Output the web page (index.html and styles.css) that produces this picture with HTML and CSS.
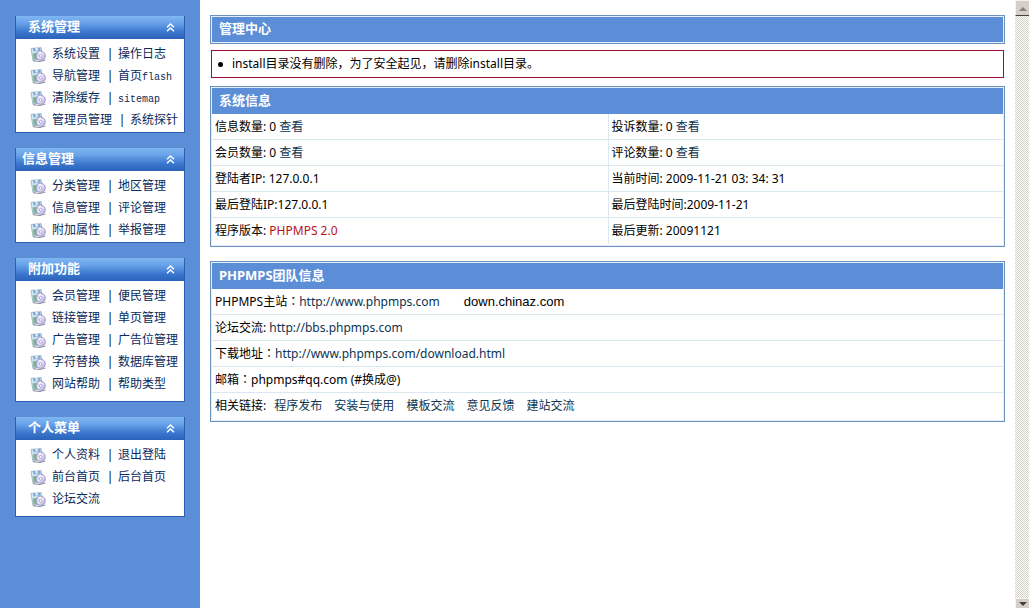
FILE: index.html
```html
<!DOCTYPE html>
<html lang="zh-CN">
<head>
<meta charset="utf-8">
<title>管理中心</title>
<link rel="stylesheet" href="styles.css">
</head>
<body>
<svg class="defs" aria-hidden="true">
  <defs>
    <linearGradient id="page-fill" x1="0" y1="0" x2="1" y2="1"><stop offset="0" stop-color="#eaf5fc"/><stop offset="1" stop-color="#8db4d6"/></linearGradient>
    <linearGradient id="disc-fill" x1="0" y1="0" x2="1" y2="1"><stop offset="0" stop-color="#c6b8ec"/><stop offset=".5" stop-color="#e9e6fa"/><stop offset="1" stop-color="#a79bd8"/></linearGradient>
    <symbol id="item-icon" viewBox="0 0 16 16">
      <path d="M1 2.5 11 1.5 13 12 3 14.5Z" fill="url(#page-fill)" stroke="#9aabc4" stroke-width=".8"/>
      <path d="M3 2h7l.4 2.4-7 .8Z" fill="#7fa9d4"/>
      <path d="M5.2 1.6h2.6v3H5.5Z" fill="#dceefa"/>
      <path d="M2.8 7.5 6 7l.8 5.5-3 .9Z" fill="#79b984"/>
      <path d="M3 14.8 10 15.5 15.5 14" fill="none" stroke="#8f91a3" stroke-width="1"/>
      <circle cx="10.7" cy="9.8" r="4.6" fill="url(#disc-fill)" stroke="#8e86b8" stroke-width=".8"/>
      <path d="M10.7 9.8 8 6.6a4 4 0 0 1 3-1Z" fill="#fff" opacity=".8"/>
      <circle cx="10.7" cy="9.8" r="1.4" fill="#fff" stroke="#9a92c4" stroke-width=".7"/>
    </symbol>
    <symbol id="collapse" viewBox="0 0 9 9">
      <path d="M1 4.3 4.5 1 8 4.3M1 8.3 4.5 5 8 8.3" fill="none" stroke="#fff" stroke-width="1.4"/>
    </symbol>
  </defs>
</svg>
<div class="layout">
  <nav class="sidebar">
    <section class="menu">
      <h2 class="menu-title">系统管理<button class="toggle" aria-label="收起"><svg><use href="#collapse"/></svg></button></h2>
      <ul class="menu-list">
        <li><svg class="icon"><use href="#item-icon"/></svg><a href="#">系统设置</a><i>|</i><a href="#">操作日志</a></li>
        <li><svg class="icon"><use href="#item-icon"/></svg><a href="#">导航管理</a><i>|</i><a href="#">首页<span class="mono">flash</span></a></li>
        <li><svg class="icon"><use href="#item-icon"/></svg><a href="#">清除缓存</a><i>|</i><a href="#"><span class="mono">sitemap</span></a></li>
        <li><svg class="icon"><use href="#item-icon"/></svg><a href="#">管理员管理</a><i>|</i><a href="#">系统探针</a></li>
      </ul>
    </section>
    <section class="menu">
      <h2 class="menu-title outdent">信息管理<button class="toggle" aria-label="收起"><svg><use href="#collapse"/></svg></button></h2>
      <ul class="menu-list">
        <li><svg class="icon"><use href="#item-icon"/></svg><a href="#">分类管理</a><i>|</i><a href="#">地区管理</a></li>
        <li><svg class="icon"><use href="#item-icon"/></svg><a href="#">信息管理</a><i>|</i><a href="#">评论管理</a></li>
        <li><svg class="icon"><use href="#item-icon"/></svg><a href="#">附加属性</a><i>|</i><a href="#">举报管理</a></li>
      </ul>
    </section>
    <section class="menu">
      <h2 class="menu-title">附加功能<button class="toggle" aria-label="收起"><svg><use href="#collapse"/></svg></button></h2>
      <ul class="menu-list roomy">
        <li><svg class="icon"><use href="#item-icon"/></svg><a href="#">会员管理</a><i>|</i><a href="#">便民管理</a></li>
        <li><svg class="icon"><use href="#item-icon"/></svg><a href="#">链接管理</a><i>|</i><a href="#">单页管理</a></li>
        <li><svg class="icon"><use href="#item-icon"/></svg><a href="#">广告管理</a><i>|</i><a href="#">广告位管理</a></li>
        <li><svg class="icon"><use href="#item-icon"/></svg><a href="#">字符替换</a><i>|</i><a href="#">数据库管理</a></li>
        <li><svg class="icon"><use href="#item-icon"/></svg><a href="#">网站帮助</a><i>|</i><a href="#">帮助类型</a></li>
      </ul>
    </section>
    <section class="menu">
      <h2 class="menu-title">个人菜单<button class="toggle" aria-label="收起"><svg><use href="#collapse"/></svg></button></h2>
      <ul class="menu-list roomy">
        <li><svg class="icon"><use href="#item-icon"/></svg><a href="#">个人资料</a><i>|</i><a href="#">退出登陆</a></li>
        <li><svg class="icon"><use href="#item-icon"/></svg><a href="#">前台首页</a><i>|</i><a href="#">后台首页</a></li>
        <li><svg class="icon"><use href="#item-icon"/></svg><a href="#">论坛交流</a></li>
      </ul>
    </section>
  </nav>
  <main class="content">
    <h1 class="page-title">管理中心</h1>
    <ul class="notice"><li>install目录没有删除，为了安全起见，请删除install目录。</li></ul>
    <table class="panel system">
      <thead><tr><th colspan="2">系统信息</th></tr></thead>
      <tbody>
        <tr><td>信息数量: 0 <a href="#">查看</a></td><td>投诉数量: 0 <a href="#">查看</a></td></tr>
        <tr><td>会员数量: 0 <a href="#">查看</a></td><td>评论数量: 0 <a href="#">查看</a></td></tr>
        <tr><td>登陆者IP: 127.0.0.1</td><td>当前时间: 2009-11-21 03: 34: 31</td></tr>
        <tr><td>最后登陆IP:127.0.0.1</td><td>最后登陆时间:2009-11-21</td></tr>
        <tr><td>程序版本: <span class="version">PHPMPS 2.0</span></td><td>最后更新: 20091121</td></tr>
      </tbody>
    </table>
    <table class="panel">
      <thead><tr><th>PHPMPS团队信息</th></tr></thead>
      <tbody>
        <tr><td>PHPMPS主站<span class="colon" lang="zh-TW">：</span><a href="#">http://www.phpmps.com</a><span class="mirror">down.chinaz.com</span></td></tr>
        <tr><td>论坛交流: <a href="#">http://bbs.phpmps.com</a></td></tr>
        <tr><td>下载地址<span class="colon" lang="zh-TW">：</span><a href="#">http://www.phpmps.com/download.html</a></td></tr>
        <tr><td>邮箱<span class="colon" lang="zh-TW">：</span>phpmps#qq.com (#换成@)</td></tr>
        <tr><td>相关链接: <span class="links"><a href="#">程序发布</a><a href="#">安装与使用</a><a href="#">模板交流</a><a href="#">意见反馈</a><a href="#">建站交流</a></span></td></tr>
      </tbody>
    </table>
  </main>
  <div class="scrollbar" aria-hidden="true">
    <span class="arrow"><svg viewBox="0 0 8 4"><path d="M0 4 4 0 8 4Z"/></svg></span>
    <span class="arrow down"><svg viewBox="0 0 8 4"><path d="M0 0 4 4 8 0Z"/></svg></span>
  </div>
</div>
</body>
</html>
```
FILE: styles.css
```css
* { box-sizing: border-box; }
body {
  margin: 0;
  background: #fff;
  color: #000;
  font: 12px/16px "Noto Sans", "Noto Sans CJK SC", sans-serif;
}
h1, h2, ul { margin: 0; padding: 0; }
ul { list-style: none; }
a { color: #0c3450; text-decoration: none; }
.defs { display: block; width: 0; height: 0; }
.layout { display: flex; min-height: 100vh; }

.sidebar {
  flex: 0 0 200px;
  display: flex;
  flex-direction: column;
  gap: 15px;
  padding: 16px 15px;
  background: #5b8ed6;
}
.menu-title {
  display: flex;
  align-items: center;
  justify-content: space-between;
  height: 23px;
  padding: 0 9px 4px 12px;
  border: solid #2a5fb4;
  border-width: 0 1px;
  background: linear-gradient(#7fb6f2, #6aa3ea 30%, #3a76cd 70%, #2a62b8);
  color: #fff;
  font-size: 13px;
}
.menu-title.outdent { padding-left: 6px; }
.toggle { display: flex; padding: 4px 0 0; border: 0; background: none; }
.toggle svg { width: 9px; height: 9px; }
.menu-list {
  padding: 4px 0 1px 14px;
  border: 1px solid #2a5fb4;
  border-top: 0;
  background: #fff;
}
.menu-list.roomy { padding-bottom: 6px; }
.menu-list li { display: flex; align-items: center; height: 22px; white-space: nowrap; }
.menu-list a { color: #0a2a5c; }
.menu-list i { width: 18px; padding-left: 2px; text-align: center; font-style: normal; }
.icon { width: 16px; height: 16px; margin-right: 6px; }
.mono { font: 10px "Liberation Mono", monospace; }

.content { flex: 1; min-width: 0; padding: 15px 10px; }
.page-title, .panel { border: 1px solid #6c93bd; box-shadow: inset 0 0 0 1px #e4eefb; }
.page-title {
  height: 29px;
  padding: 4px 8px;
  background: #5b8ed6;
  color: #fff;
  font-size: 13px;
  line-height: 17px;
}
.notice { margin: 6px 1px 8px; padding: 5px 4px; border: 1px solid #98102e; }
.notice li { display: flex; align-items: center; gap: 8px; }
.notice li::before { content: ""; width: 5px; height: 5px; margin: 0 1px 0 2px; border-radius: 50%; background: #000; }

.panel {
  width: 100%;
  margin-bottom: 14px;
  padding: 1px 1px 2px;
  border-spacing: 0;
  table-layout: fixed;
}
.panel th {
  height: 26px;
  padding: 0 7px 3px;
  background: #5b8ed6;
  color: #fff;
  font-size: 13px;
  text-align: left;
}
.panel td { height: 26px; padding: 0 3px; border-bottom: 1px solid #dbe8f0; }
.panel tr:last-child td { border-bottom: 0; }
.system td + td { border-left: 1px solid #dbe8f0; }
.version { color: #b8141c; }
.colon { font-family: "Noto Sans CJK TC", sans-serif; }
.mirror { margin-left: 24px; font-family: "Liberation Sans", sans-serif; font-size: 13px; }
.links { display: inline-flex; gap: 12px; margin-left: 5px; }

.scrollbar {
  flex: 0 0 14px;
  display: flex;
  flex-direction: column;
  justify-content: space-between;
  background: repeating-conic-gradient(#d4d0c8 0 25%, #fff 0 50%) 0 0 / 2px 2px;
}
.arrow {
  display: flex;
  justify-content: center;
  height: 16px;
  padding-top: 6px;
  border: solid #f4f2ee;
  border-width: 1px 0 0 1px;
  border-bottom: 1px solid #404040;
  background: #d4d0c8;
}
.arrow svg { width: 8px; height: 4px; fill: #808080; }
.arrow.down { height: 10px; padding-top: 3px; border-bottom: 0; }
.arrow.down svg { fill: #404040; }
```
